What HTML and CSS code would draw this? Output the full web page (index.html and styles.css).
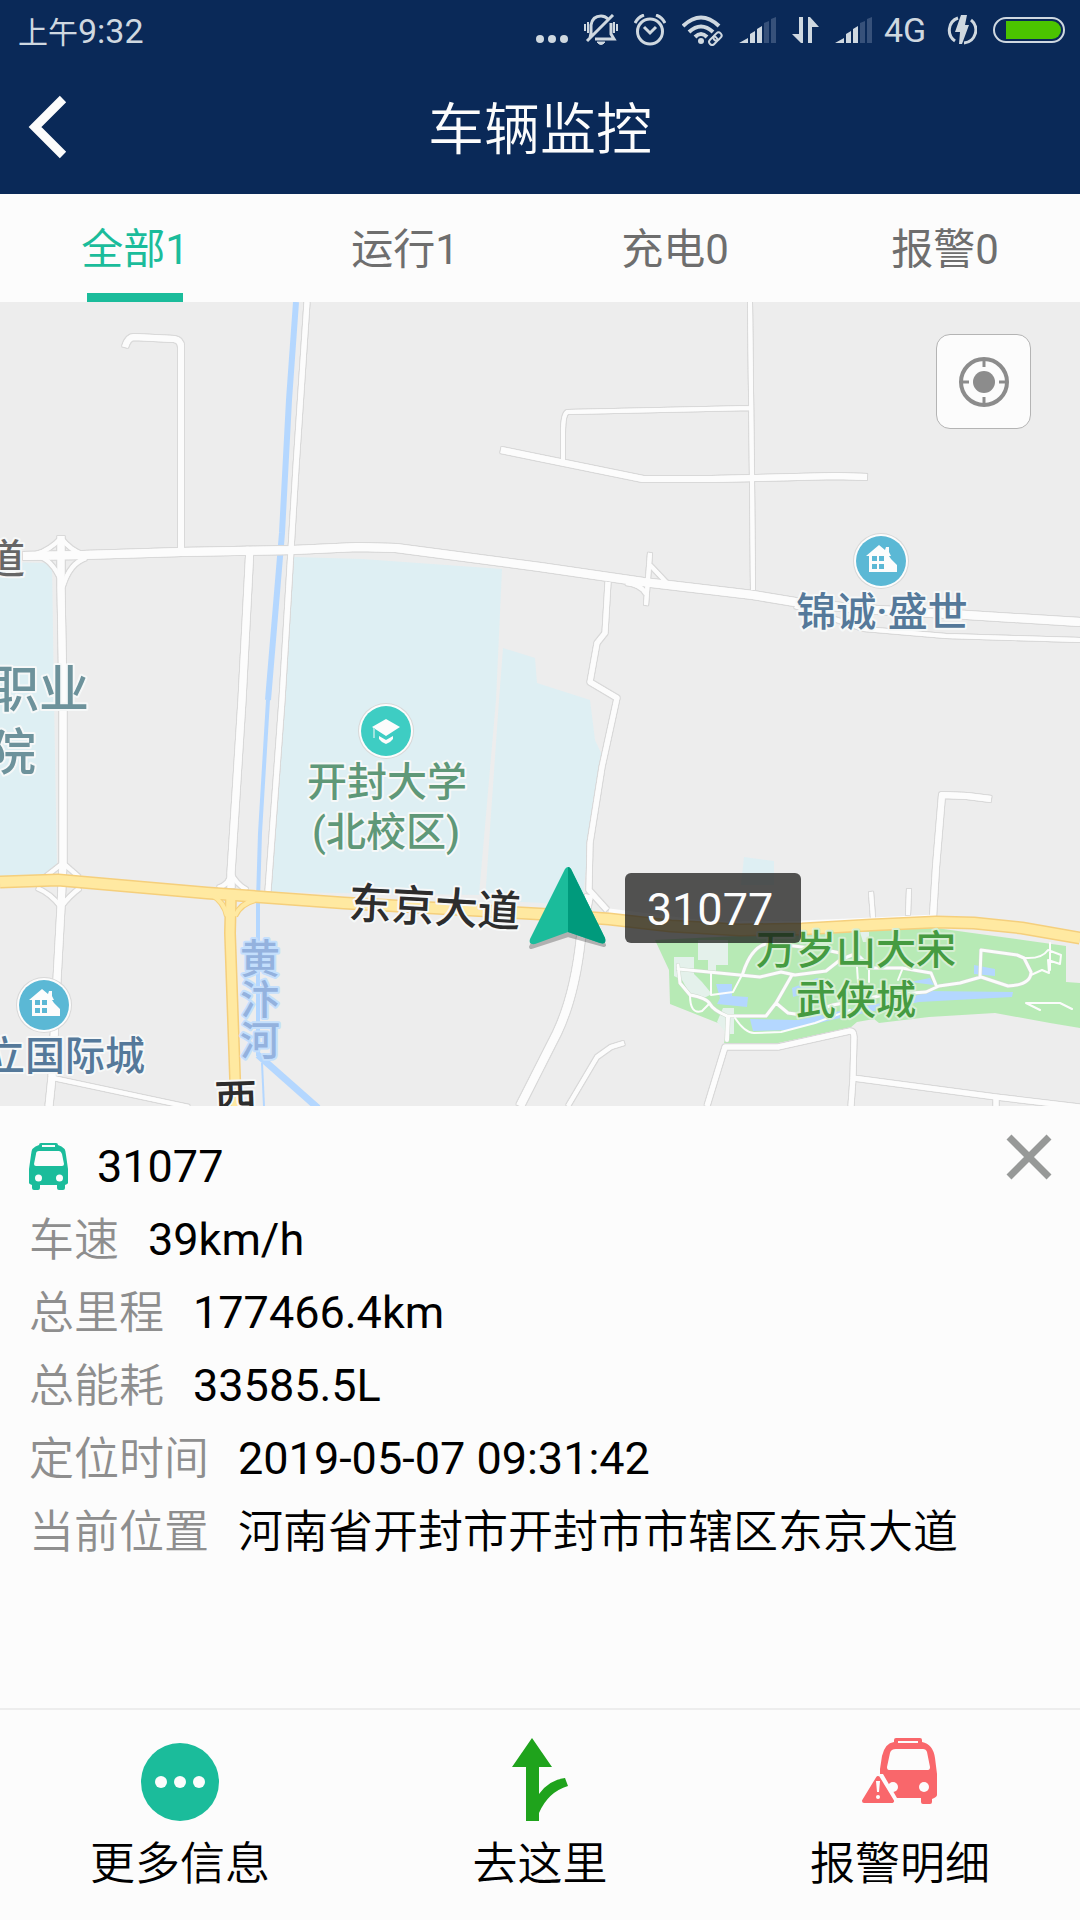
FILE: index.html
```html
<!DOCTYPE html>
<html lang="zh-CN">
<head>
<meta charset="utf-8">
<meta name="viewport" content="width=device-width, initial-scale=1">
<title>车辆监控</title>
<link rel="stylesheet" href="styles.css">
</head>
<body>
<header class="header">
  <div class="status">
    <div class="status-time"><span class="status-period">上午</span>9:32</div>
    <div class="status-icons">
      <svg width="32" height="32" viewBox="0 0 32 32" fill="#cfd8e0"><circle cx="4" cy="25" r="4"/><circle cx="16" cy="25" r="4"/><circle cx="28" cy="25" r="4"/></svg>
      <svg width="34" height="32" viewBox="0 0 34 32" fill="none" stroke="#cfd8e0" stroke-width="3"><path d="M6 24L7 19V11C8 5 12 2 17 2C20 2 22 3 24 5M27 9V20L30 25H11M29 1L3 27"/><path d="M1 10V17M4 8V19M33 10V17M30 8V19" stroke-width="2"/><path d="M13 28H21Q17 33 13 28Z" fill="#cfd8e0" stroke-width="1"/></svg>
      <svg width="32" height="32" viewBox="0 0 32 32" fill="none" stroke="#cfd8e0" stroke-width="3"><circle cx="16" cy="17.500" r="12.500"/><path d="M10 13L16 19L22 13M1 9Q4 3 10 1M31 9Q28 3 22 1"/></svg>
      <svg width="41" height="32" viewBox="0 0 41 32" fill="none" stroke="#cfd8e0" stroke-width="4"><path d="M1 12Q19-5 37 12M7 18Q19 7 31 18M13 23Q19 17 25 23"/><circle cx="19" cy="27" r="3" fill="#cfd8e0" stroke="none"/><g stroke-width="2" transform="rotate(-45 33 25)"><rect x="26" y="22" width="9" height="6" rx="3"/><rect x="32" y="22" width="9" height="6" rx="3"/></g></svg>
      <svg width="37" height="32" viewBox="0 0 37 32" fill="#cfd8e0"><path d="M0 29L9 24V29ZM11 29V20L16 17V29ZM18 29V15L23 12V29Z"/><path d="M25 29V9L30 7V29ZM32 29V5L37 3V29Z" fill="#37517a"/></svg>
      <svg width="27" height="32" viewBox="0 0 27 32" fill="#cfd8e0"><path d="M7 3H11V29H9L0 20H7ZM16 3H18L27 13H20V29H16Z"/></svg>
      <svg width="37" height="32" viewBox="0 0 37 32" fill="#cfd8e0"><path d="M0 29L9 24V29ZM11 29V20L16 17V29ZM18 29V15L23 12V29Z"/><path d="M25 29V9L30 7V29ZM32 29V5L37 3V29Z" fill="#37517a"/></svg>
      <span class="status-network">4G</span>
      <svg width="30" height="32" viewBox="0 0 30 32"><path d="M11 4A13 13 0 0 0 8 27M24 6A13 13 0 0 1 17 29" fill="none" stroke="#cfd8e0" stroke-width="3"/><path d="M14 1H20L18 11H22L15 30H12L13 18H8Z" fill="#cfd8e0"/></svg>
      <svg width="72" height="32" viewBox="0 0 72 32"><rect x="1" y="4" width="70" height="24" rx="12" fill="none" stroke="#cfd8e0" stroke-width="2"/><path d="M13 7H59A9 9 0 0 1 59 25H13Z" fill="#4bc400"/></svg>
    </div>
  </div>
  <div class="titlebar">
    <button class="back" type="button" aria-label="返回"><svg width="40" height="64" viewBox="0 0 40 64" fill="none" stroke="#fcfcfc" stroke-width="9"><path d="M35 4L7 32L35 60"/></svg></button>
    <h1 class="title">车辆监控</h1>
  </div>
</header>

<nav class="tabs">
  <button class="tab tab-active" type="button">全部1</button>
  <button class="tab" type="button">运行1</button>
  <button class="tab" type="button">充电0</button>
  <button class="tab" type="button">报警0</button>
</nav>

<main class="map">
  <svg class="map-canvas" viewBox="0 302 1080 804" preserveAspectRatio="xMidYMid slice">
    <defs>
      <g id="local-roads">
        <path d="M125 347Q128 337 134 337L174 339Q181 340 181 347V548" stroke-width="6"/>
        <path d="M307 302L296 467L291 550L282 700L268 891" stroke-width="5"/>
        <path d="M23 556L83 555L181 552L293 550L358 547L396 548L540 567L643 582L753 595L795 602L860 609L967 615L1080 622" stroke-width="8"/>
        <path d="M795 606L864 629L946 636L1080 640" stroke-width="4"/>
        <path d="M61 536V587L63 700V863L61 907L57 980L52 1077L49 1106" stroke-width="7"/>
        <path d="M36 554Q50 550 61 538Q70 550 84 555M41 557Q55 563 63 586Q70 563 86 558M45 877L63 863L79 877M37 888Q50 893 61 907Q70 895 80 888" stroke-width="4"/>
        <path d="M250 547L242 700L231 873V888" stroke-width="7"/>
        <path d="M218 888Q230 884 231 873Q236 884 247 890" stroke-width="4"/>
        <path d="M750 302L752 480L753 590M563 460V433Q563 412 568 412L752 408" stroke-width="4"/>
        <path d="M501 450L540 458L643 479L712 479L836 476L867 477" stroke-width="6"/>
        <path d="M650 553L646 605M650 565L667 583M626 583Q642 585 646 594" stroke-width="4"/>
        <path d="M608 582L605 633L597 643L590 682L617 698L602 767L590 843L589 890L607 910" stroke-width="5"/>
        <path d="M589 895L581 937Q575 995 557 1033L520 1106" stroke-width="8"/>
        <path d="M624 1043L611 1047L597 1057L568 1106M871 892L873 918M909 889L908 915" stroke-width="4"/>
        <path d="M991 799L967 796L942 795L936 867L933 917" stroke-width="6"/>
        <path d="M707 1106L725 1047H778L850 1031Q854 1031 854 1037L853 1078L851 1106M853 1078L996 1097L1080 1107M996 1097V1106" stroke-width="5"/>
        <path d="M53 1078L189 1107" stroke-width="4"/>
      </g>
      <g id="pin-house">
        <circle r="28" fill="#d8d8d8"/><circle r="27" fill="#fcfcfc"/><circle r="25" fill="#5bb8d5"/>
        <path d="M-15-5L-2-16L4-11L5-14H8V-9L10-5H8L10-2L16 4V11H-12V-5Z" fill="#fcfcfc"/>
        <path d="M-9-5H-4V0H-9ZM-2-5H3V0H-2ZM-9 3H-4V8H-9ZM-2 3H3V8H-2Z" fill="#5bb8d5"/>
      </g>
    </defs>
    <rect x="0" y="302" width="1080" height="804" fill="#ededed"/>
    <g fill="#deeff3">
      <path d="M0 562L52 563L54 700L57 867L54 876H0Z"/>
      <path d="M294 557L362 559L502 569L496 700L479 895L270 892Z"/>
      <path d="M503 648L535 658L537 683L590 700L595 740L602 755L589 840L582 905L485 900L499 700Z"/>
      <path d="M744 857L774 861V885H741Z"/>
    </g>
    <path d="M655 940L669 970L670 1004L728 1027L724 1043H778L850 1028L857 1022L874 1019L879 1023L929 1017L995 1013L1050 1023L1080 1028V983L1066 982V946L936 928L802 933Z" fill="#b7eab5"/>
    <g fill="#e4f1eb">
      <path d="M698 940H728V965H716V973H708V960H698Z"/><path d="M674 957H694V974L702 982L712 994L704 998L690 994L682 980L674 976Z"/><path d="M723 1008H734V1034H727L717 1022Z"/><path d="M860 932H869V942H863Z"/>
    </g>
    <g fill="#b4d7ff">
      <path d="M716 984H732V996L748 997L747 1007L717 1004L720 998Z"/>
      <path d="M750 1019L798 1020L840 1011L912 997L929 991L1013 992L1012 997L919 1002L840 1018L790 1030L753 1031Z"/>
      <path d="M974 965L995 969V976L974 974Z"/><path d="M792 988L817 978L829 981L813 991L793 997Z"/><path d="M910 982L930 978L934 985Z"/>
    </g>
    <g fill="none" stroke="#b4d7ff" stroke-linejoin="round">
      <path d="M296 302L289 400L282 533L268 700" stroke-width="6"/>
      <path d="M268 700L260 833L258 900V1056" stroke-width="4"/>
      <path d="M258 1055L318 1108" stroke-width="7"/><path d="M262 1063L264 1106" stroke-width="2"/>
    </g>
    <g fill="none" stroke="#cdd9cd" stroke-linejoin="round" stroke-linecap="round">
      <path d="M678 965L680 983L690 995Q707 998 710 1004T727 1016H766L776 1003L788 1013L802 1015L833 1005L884 995L926 992L939 986L960 983L981 977L1008 986Q1031 985 1031 972L1024 958L1017 955L981 950L980 977" stroke-width="4"/>
      <path d="M678 969L760 977L781 972L795 975L826 971L840 960L852 955L860 957L871 968H902L931 973L936 985M743 973Q752 945 770 943L826 950L840 953M792 975L776 1003" stroke-width="4"/>
      <path d="M728 1017L727 1040" stroke-width="5"/>
    </g>
    <g fill="none" stroke="#fcfcfc" stroke-linejoin="round" stroke-linecap="round">
      <path d="M678 965L680 983L690 995Q707 998 710 1004T727 1016H766L776 1003L788 1013L802 1015L833 1005L884 995L926 992L939 986L960 983L981 977L1008 986Q1031 985 1031 972L1024 958L1017 955L981 950L980 977M678 969L760 977L781 972L795 975L826 971L840 960L852 955L860 957L871 968H902L931 973L936 985M743 973Q752 945 770 943L826 950L840 953M792 975L776 1003" stroke-width="3"/>
      <path d="M711 973V995L733 992L743 973M735 1018Q745 1033 754 1033L781 1032L815 1023L850 1010M690 995Q690 1015 702 1011L709 1004M1025 958Q1042 959 1048 950L1061 955L1060 964L1048 960L1049 973L1042 970L1031 975M1050 943V970M857 967L858 982M869 968V982M902 970L898 980M1027 1003H1060L1072 1009M1026 1003L1040 1010" stroke-width="2"/>
      <path d="M728 1017L727 1040" stroke-width="4"/>
    </g>
    <use href="#local-roads" class="road-casing"/>
    <use href="#local-roads" class="road"/>
    <path d="M609 911L712 924L802 923L873 920L936 917" fill="none" stroke="#fcfcfc" stroke-width="5"/>
    <g fill="none" stroke-linejoin="round">
      <g stroke="#f5cf7c"><path d="M0 882L58 880L207 893L344 903L540 914L609 919L671 926L740 930L802 929L871 925L936 922L974 923L1022 928L1080 938" stroke-width="13"/><path d="M231 893L230 933L236 1106" stroke-width="12"/><path d="M212 895Q224 902 227 916M255 900Q240 904 235 916" stroke-width="6"/></g>
      <g stroke="#ffe9a1"><path d="M212 895Q224 902 227 916M255 900Q240 904 235 916" stroke-width="4"/><path d="M231 893L230 933L236 1106" stroke-width="9"/><path d="M0 882L58 880L207 893L344 903L540 914L609 919L671 926L740 930L802 929L871 925L936 922L974 923L1022 928L1080 938" stroke-width="10"/></g>
    </g>

    <use href="#pin-house" x="881" y="561"/>
    <use href="#pin-house" x="44" y="1005"/>
    <g transform="translate(386 731)">
      <circle r="28" fill="#d8d8d8"/><circle r="27" fill="#fcfcfc"/><circle r="25" fill="#3ecdc3"/>
      <path d="M0-12L14-4L0 5L-14-4ZM-7 5L0 9L7 5V8Q4 12 0 13Q-4 12-7 8Z" fill="#fcfcfc"/><path d="M-12-3V7" stroke="#9fe4df" stroke-width="2"/>
    </g>

    <g class="place">
      <text x="882" y="626" class="estate" text-anchor="middle">锦诚·盛世</text>
      <text x="-15" y="1070" class="estate">立国际城</text>
      <text x="387" y="796" class="school" text-anchor="middle">开封大学</text>
      <text x="386" y="846" class="school" text-anchor="middle">(北校区)</text>
      <text x="856" y="964" class="park" text-anchor="middle">万岁山大宋</text>
      <text x="856" y="1014" class="park" text-anchor="middle">武侠城</text>
      <text x="-15" y="573" class="road-minor">道</text>
      <g class="river"><text x="240" y="973">黄</text><text x="240" y="1014">汴</text><text x="240" y="1055">河</text></g>
    </g>
    <g class="place place-large"><text x="-11" y="707">职业</text><text x="-14" y="770">院</text></g>
    <g class="place place-road"><text x="348" y="918" transform="rotate(3 348 918)">东京大道</text><text x="215" y="1116" transform="rotate(-2 215 1116)">西</text></g>

    <path d="M568 870L604 945L568 935L531 947Z" fill="#000" opacity=".25" stroke="#000" stroke-width="4" stroke-linejoin="round"/>
    <path d="M565 869Q568 865 571 869L605 938Q607 945 600 943L568 932L535 944Q528 945 530 939Z" fill="#1bbc9b"/>
    <path d="M568 867Q570 867 571 869L605 938Q607 945 600 943L568 932Z" fill="#009a7c"/>
    <rect x="625" y="873" width="176" height="70" rx="6" fill="#191a18" fill-opacity=".74"/>
    <text x="710" y="925" class="vehicle-tag" text-anchor="middle">31077</text>
  </svg>
  <button class="locate" type="button" aria-label="定位"><svg width="52" height="52" viewBox="0 0 52 52" fill="none" stroke="#8c8c8c" stroke-width="4"><circle cx="26" cy="26" r="23"/><circle cx="26" cy="26" r="11" fill="#8c8c8c" stroke="none"/><path d="M26 4V11M26 41V48M4 26H11M41 26H48" stroke-width="3"/></svg></button>
</main>

<section class="details">
  <button class="close" type="button" aria-label="关闭"><svg width="46" height="46" viewBox="0 0 46 46" fill="none" stroke="#979998" stroke-width="7"><path d="M3 3L43 43M43 3L3 43"/></svg></button>
  <div class="row">
    <svg width="39" height="47" viewBox="0 0 39 47"><path fill="#1bbc9b" fill-rule="evenodd" d="M10 2Q10 0 12 0H27Q29 0 29 2Q37 4 37 12L39 26V40Q39 41 36 42V45Q36 47 34 47H30Q28 47 28 45V42H11V45Q11 47 9 47H5Q3 47 3 45V42Q0 41 0 40V26L2 12Q2 4 10 2ZM13 2V4H26V2ZM10 8Q7 8 7 11L5 21Q5 23 7 23H33Q35 23 35 21L33 11Q32 8 30 8Z"/><circle cx="9.500" cy="35" r="3.500" fill="#fcfcfc"/><circle cx="30.500" cy="35" r="3.500" fill="#fcfcfc"/></svg>
    <strong class="value">31077</strong>
  </div>
  <dl class="facts">
    <div class="row"><dt class="label">车速</dt><dd class="value">39km/h</dd></div>
    <div class="row"><dt class="label">总里程</dt><dd class="value">177466.4km</dd></div>
    <div class="row"><dt class="label">总能耗</dt><dd class="value">33585.5L</dd></div>
    <div class="row"><dt class="label">定位时间</dt><dd class="value">2019-05-07 09:31:42</dd></div>
    <div class="row"><dt class="label">当前位置</dt><dd class="value value-cjk">河南省开封市开封市市辖区东京大道</dd></div>
  </dl>
</section>

<footer class="actions">
  <button class="action" type="button">
    <svg width="80" height="84" viewBox="0 0 80 84"><circle cx="40" cy="44" r="39" fill="#1bbc9b"/><g fill="#fcfcfc"><circle cx="21" cy="44" r="6"/><circle cx="40" cy="44" r="6"/><circle cx="59" cy="44" r="6"/></g></svg>
    更多信息
  </button>
  <button class="action" type="button">
    <svg width="80" height="84" viewBox="0 0 80 84" fill="#1fa31c"><path d="M32 0L52 29H39V56Q49 42 65 40L68 48Q48 54 39 75V83H26V29H12Z"/></svg>
    去这里
  </button>
  <button class="action" type="button">
    <svg width="80" height="84" viewBox="0 0 80 84"><path fill="#f9676b" fill-rule="evenodd" d="M34 2Q34 0 36 0H60Q62 0 62 2V4Q73 6 75 20L77 36V57Q77 59 72 61V64Q72 66 70 66H63Q61 66 61 64V60H37L23 36H20V31L22 18Q25 5 34 4ZM38 3V5H58V3ZM36 11Q31 11 30 15L27 29Q27 32 29 32H68Q70 32 70 29L67 14Q66 11 63 11Z"/><circle cx="33" cy="49" r="5" fill="#fcfcfc"/><circle cx="64" cy="49" r="5" fill="#fcfcfc"/><path d="M18 40L32 63H4Z" fill="#fcfcfc" stroke="#fcfcfc" stroke-width="9" stroke-linejoin="round"/><path d="M18 40L32 63H4Z" fill="#f9676b" stroke="#f9676b" stroke-width="4" stroke-linejoin="round"/><path d="M16 43H20L19 54H17Z" fill="#fcfcfc"/><circle cx="18" cy="59" r="2" fill="#fcfcfc"/></svg>
    报警明细
  </button>
</footer>
</body>
</html>
```
FILE: styles.css
```css
* { box-sizing: border-box; }

body {
  margin: 0;
  min-height: 100vh;
  display: flex;
  flex-direction: column;
  background: #fcfcfc;
  color: #000;
  font-family: Roboto, "Noto Sans CJK SC", sans-serif;
  font-size: 45px;
}

button {
  margin: 0;
  padding: 0;
  border: 0;
  background: none;
  color: inherit;
  font: inherit;
}

svg { display: block; flex: none; }

.header { background: #0a2958; color: #fcfcfc; }

.status {
  height: 60px;
  padding: 0 15px 0 18px;
  display: flex;
  align-items: center;
  justify-content: space-between;
  color: #cfd8e0;
  font-size: 34px;
}
.status-period { font-size: 30px; }
.status-icons { display: flex; align-items: center; gap: 16px; }
.status-network { width: 47px; margin-left: -4px; }

.titlebar {
  height: 134px;
  padding: 5px 28px 0;
  display: grid;
  grid-template-columns: 40px 1fr 40px;
  align-items: center;
}
.back { padding-bottom: 5px; }
.title {
  margin: 0;
  font-size: 56px;
  font-weight: 350;
  line-height: 80px;
  text-align: center;
}

.tabs { display: flex; height: 108px; }
.tab {
  flex: 1;
  display: flex;
  flex-direction: column;
  align-items: center;
  justify-content: space-between;
  color: #6e6e6e;
  font-size: 42px;
  line-height: 60px;
  padding-top: 26px;
}
.tab-active { color: #1bbc9b; }
.tab-active::after { content: ""; width: 96px; height: 9px; background: #1bbc9b; }

.map {
  position: relative;
  flex: 1;
  min-height: 400px;
  overflow: hidden;
  background: #ededed;
}
.map-canvas { position: absolute; inset: 0; width: 100%; height: 100%; }
.road { stroke: #fcfcfc; fill: none; stroke-linejoin: round; }
.road-casing {
  fill: none;
  stroke: #fcfcfc;
  stroke-linejoin: round;
  filter: drop-shadow(1px 0 0 #d9d9d9) drop-shadow(-1px 0 0 #d9d9d9) drop-shadow(0 1px 0 #d9d9d9) drop-shadow(0 -1px 0 #d9d9d9);
}
.place {
  font-size: 40px;
  font-weight: 500;
  stroke: #f6f8f8;
  stroke-width: 4px;
  stroke-linejoin: round;
  paint-order: stroke;
}
.place-large { font-size: 50px; fill: #6d929b; }
.place-road { font-size: 43px; fill: #2d2d2d; }
.estate { fill: #55799a; }
.school { fill: #5f9878; }
.park { fill: #459b41; stroke: #d5efd3; }
.road-minor { fill: #666; }
.river { fill: #94b2de; stroke: #c4dffc; }
.vehicle-tag { font-size: 45px; fill: #fcfcfc; }

.locate {
  position: absolute;
  top: 32px;
  right: 49px;
  width: 95px;
  height: 95px;
  display: grid;
  place-items: center;
  border: 1px solid #b4b4b4;
  border-radius: 14px;
  background: #fcfcfc;
}

.details { position: relative; padding: 24px 28px 140px 29px; }
.close { position: absolute; top: 28px; right: 28px; }
.facts { margin: 0; }
.row {
  display: flex;
  align-items: center;
  gap: 29px;
  min-height: 73px;
  line-height: 73px;
}
.label { color: #8e8e8e; font-weight: 350; padding-top: 2px; line-height: 71px; }
.value { margin: 0; font-weight: 400; }
.value-cjk { font-weight: 350; padding-top: 2px; line-height: 71px; }

.actions {
  display: flex;
  border-top: 2px solid #ededed;
  padding: 28px 0 25px;
}
.action {
  flex: 1;
  display: flex;
  flex-direction: column;
  align-items: center;
  gap: 13px;
  font-weight: 350;
  line-height: 60px;
}
```
